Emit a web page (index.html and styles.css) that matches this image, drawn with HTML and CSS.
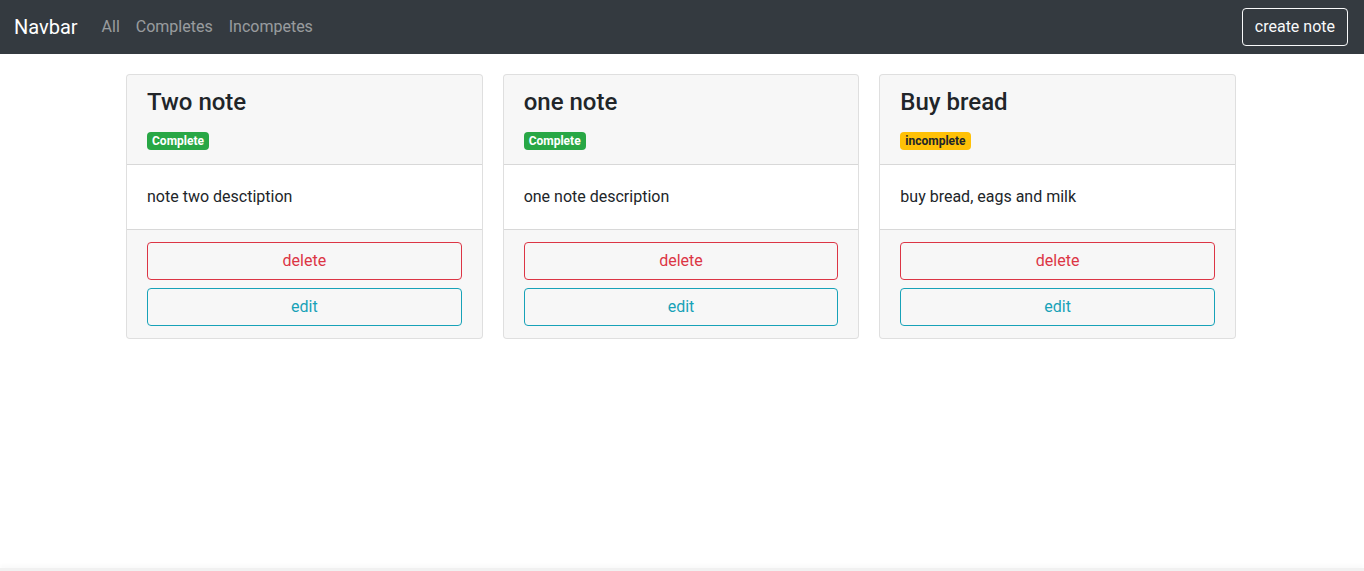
FILE: index.html
```html
<!DOCTYPE html>
<html lang="en">
<head>
<meta charset="utf-8">
<title>Notes</title>
<link rel="stylesheet" href="styles.css">
</head>
<body>
<nav class="navbar">
  <div class="nav-left">
    <a class="brand" href="#">Navbar</a>
    <a class="nav-link" href="#">All</a>
    <a class="nav-link" href="#">Completes</a>
    <a class="nav-link" href="#">Incompetes</a>
  </div>
  <button class="btn btn-outline-light">create note</button>
</nav>
<main class="container">
  <div class="cards">
    <div class="card">
      <div class="card-header">
        <h4 class="card-title">Two note</h4>
        <div class="badge-line"><span class="badge badge-success">Complete</span></div>
      </div>
      <div class="card-body"><p class="card-text">note two desctiption</p></div>
      <div class="card-footer">
        <button class="btn btn-block btn-outline-danger">delete</button>
        <button class="btn btn-block btn-outline-info">edit</button>
      </div>
    </div>
    <div class="card">
      <div class="card-header">
        <h4 class="card-title">one note</h4>
        <div class="badge-line"><span class="badge badge-success">Complete</span></div>
      </div>
      <div class="card-body"><p class="card-text">one note description</p></div>
      <div class="card-footer">
        <button class="btn btn-block btn-outline-danger">delete</button>
        <button class="btn btn-block btn-outline-info">edit</button>
      </div>
    </div>
    <div class="card">
      <div class="card-header">
        <h4 class="card-title">Buy bread</h4>
        <div class="badge-line"><span class="badge badge-warning">incomplete</span></div>
      </div>
      <div class="card-body"><p class="card-text">buy bread, eags and milk</p></div>
      <div class="card-footer">
        <button class="btn btn-block btn-outline-danger">delete</button>
        <button class="btn btn-block btn-outline-info">edit</button>
      </div>
    </div>
  </div>
</main>
<div class="bottom-shade"></div>
</body>
</html>
```
FILE: styles.css
```css
* { box-sizing: border-box; }
html, body { margin: 0; padding: 0; }
body {
  font-family: Roboto, "Liberation Sans", sans-serif;
  font-size: 16px;
  line-height: 1.5;
  color: #212529;
  background: #fff;
}
.navbar {
  height: 54px;
  background: #343a40;
  display: flex;
  align-items: center;
  justify-content: space-between;
  padding: 0 16px 0 14px;
}
.nav-left { display: flex; align-items: center; }
.brand {
  color: #fff;
  font-size: 20px;
  line-height: 30px;
  text-decoration: none;
  margin-right: 16px;
}
.nav-link {
  color: rgba(255,255,255,.5);
  text-decoration: none;
  padding: 8px 8px;
  line-height: 24px;
}
.btn {
  font-family: inherit;
  font-size: 16px;
  line-height: 24px;
  padding: 6px 12px;
  border: 1px solid transparent;
  border-radius: 4px;
  background: transparent;
  cursor: pointer;
  text-align: center;
}
.btn-outline-light { color: #f8f9fa; border-color: #f8f9fa; }
.btn-outline-danger { color: #dc3545; border-color: #dc3545; }
.btn-outline-info { color: #17a2b8; border-color: #17a2b8; }
.btn-block { display: block; width: 100%; }
.btn-block + .btn-block { margin-top: 8px; }
.container {
  width: 1112px;
  padding-right: 2px;
  margin: 20px auto 0;
}
.cards {
  display: grid;
  grid-template-columns: repeat(3, 1fr);
  column-gap: 20px;
  align-items: start;
}
.card {
  border: 1px solid rgba(0,0,0,.125);
  border-radius: 4px;
  overflow: hidden;
  background: #fff;
}
.card-header {
  background: rgba(0,0,0,.03);
  padding: 13px 20px 11px;
  border-bottom: 1px solid rgba(0,0,0,.125);
}
.card-title {
  margin: 0 0 12px;
  font-size: 24px;
  font-weight: 500;
  line-height: 1.2;
}
.badge-line { line-height: 24px; height: 24px; display: flex; align-items: center; }
.badge {
  display: inline-block;
  font-size: 12px;
  font-weight: 700;
  line-height: 1;
  padding: 3px 5px;
  border-radius: 4px;
}
.badge-success { background: #28a745; color: #fff; }
.badge-warning { background: #ffc107; color: #212529; }
.card-body { padding: 20px; }
.card-text { margin: 0; }
.card-footer {
  background: rgba(0,0,0,.03);
  padding: 12px 20px;
  border-top: 1px solid rgba(0,0,0,.125);
}
.bottom-shade {
  position: fixed;
  left: 0; right: 0; bottom: 0;
  height: 3px;
  background: #f1f1f1;
  box-shadow: 0 -2px 4px rgba(0,0,0,.04);
}
```
